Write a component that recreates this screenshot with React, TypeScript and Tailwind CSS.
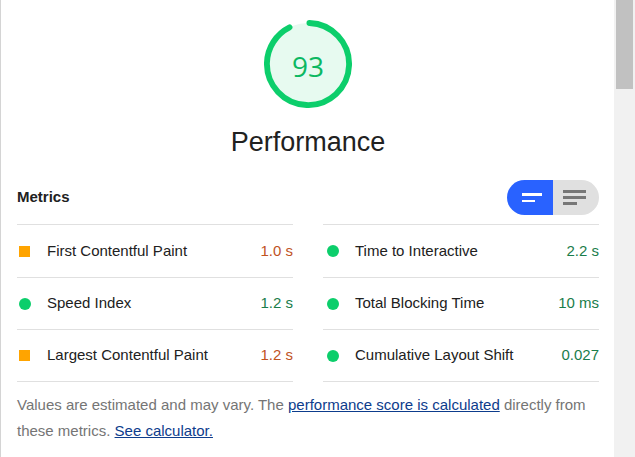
import React from "react";

type Metric = { label: string; value: string; status: "avg" | "pass" };

const left: Metric[] = [
  { label: "First Contentful Paint", value: "1.0 s", status: "avg" },
  { label: "Speed Index", value: "1.2 s", status: "pass" },
  { label: "Largest Contentful Paint", value: "1.2 s", status: "avg" },
];
const right: Metric[] = [
  { label: "Time to Interactive", value: "2.2 s", status: "pass" },
  { label: "Total Blocking Time", value: "10 ms", status: "pass" },
  { label: "Cumulative Layout Shift", value: "0.027", status: "pass" },
];

function Row({ m, first, side }: { m: Metric; first: boolean; side: "l" | "r" }) {
  return (
    <div
      className={
        first
          ? "flex h-[53px] items-center border-t border-[#e0e0e0]"
          : "flex h-[52px] items-center border-t border-[#e0e0e0]"
      }
    >
      <div
        className={
          side === "l"
            ? "flex w-[30px] shrink-0 items-center pl-[2px]"
            : "flex w-[32px] shrink-0 items-center pl-[4px]"
        }
      >
        {m.status === "avg" ? (
          <div className="h-[11px] w-[11px] bg-[#ffa400]" />
        ) : (
          <div className="h-[12px] w-[12px] rounded-full bg-[#0cce6b]" />
        )}
      </div>
      <div className="flex-1 text-[15px] text-[#212121]">{m.label}</div>
      <div
        className={
          m.status === "avg"
            ? "text-[15px] text-[#c0531f]"
            : "text-[15px] text-[#1a7d4b]"
        }
      >
        {m.value}
      </div>
    </div>
  );
}

export default function App() {
  const r = 56;
  const c = 2 * Math.PI * r;
  return (
    <div
      className="flex h-[457px] w-[635px] overflow-hidden bg-white"
      style={{ fontFamily: '"Liberation Sans", Arial, sans-serif' }}
    >
      <div className="flex-1 border-l border-[#d4d4d4] pl-[16px] pr-[15px] pt-[20px]">
        <div className="flex flex-col items-center">
          <div className="relative h-[88px] w-[88px]">
            <svg viewBox="0 0 120 120" className="h-[88px] w-[88px]">
              <circle cx="60" cy="60" r="56" fill="#e7faf0" />
              <circle
                cx="60"
                cy="60"
                r={r}
                fill="none"
                stroke="#0cce6b"
                strokeWidth="8"
                strokeLinecap="round"
                strokeDasharray={`${c * 0.93 - 4} ${c}`}
                transform="rotate(-88 60 60)"
              />
            </svg>
            <div
              className="absolute inset-0 flex items-center justify-center pt-[3px] text-[28px] text-[#0cb862]"
              style={{ fontFamily: '"Open Sans", "Noto Sans", sans-serif' }}
            >
              93
            </div>
          </div>
          <div className="mt-[19px] text-[27px] leading-[30px] text-[#212121]">
            Performance
          </div>
        </div>

        <div className="mt-[23px] flex h-[35px] items-center justify-between">
          <div className="text-[15px] font-bold text-[#212121]">Metrics</div>
          <div className="flex h-[35px] w-[92px] overflow-hidden rounded-full">
            <div className="flex w-[46px] flex-col justify-center gap-[4px] bg-[#2962ff] pl-[15px]">
              <div className="h-[2.5px] w-[20px] bg-white" />
              <div className="h-[2.5px] w-[13px] bg-white" />
            </div>
            <div className="flex w-[46px] flex-col justify-center gap-[3.5px] bg-[#e0e0e0] pl-[10px]">
              <div className="h-[2.5px] w-[23px] bg-[#777777]" />
              <div className="h-[2.5px] w-[23px] bg-[#777777]" />
              <div className="h-[2.5px] w-[14px] bg-[#777777]" />
            </div>
          </div>
        </div>

        <div className="mt-[9px] grid grid-cols-2 gap-x-[30px]">
          <div className="border-b border-[#e0e0e0]">
            {left.map((m, i) => (
              <Row key={m.label} m={m} first={i === 0} side="l" />
            ))}
          </div>
          <div className="border-b border-[#e0e0e0]">
            {right.map((m, i) => (
              <Row key={m.label} m={m} first={i === 0} side="r" />
            ))}
          </div>
        </div>

        <p className="pt-[10px] text-[15px] leading-[26px] text-[#757575]">
          Values are estimated and may vary. The{" "}
          <a className="text-[#0d3c8c] underline" href="#">
            performance score is calculated
          </a>{" "}
          directly from these metrics.{" "}
          <a className="text-[#0d3c8c] underline" href="#">
            See calculator.
          </a>
        </p>
      </div>
      <div className="h-full w-[21px] shrink-0 bg-[#f1f1f1] pl-[2px] pr-[2px]">
        <div className="h-[89px] w-[17px] bg-[#c1c1c1]" />
      </div>
    </div>
  );
}
